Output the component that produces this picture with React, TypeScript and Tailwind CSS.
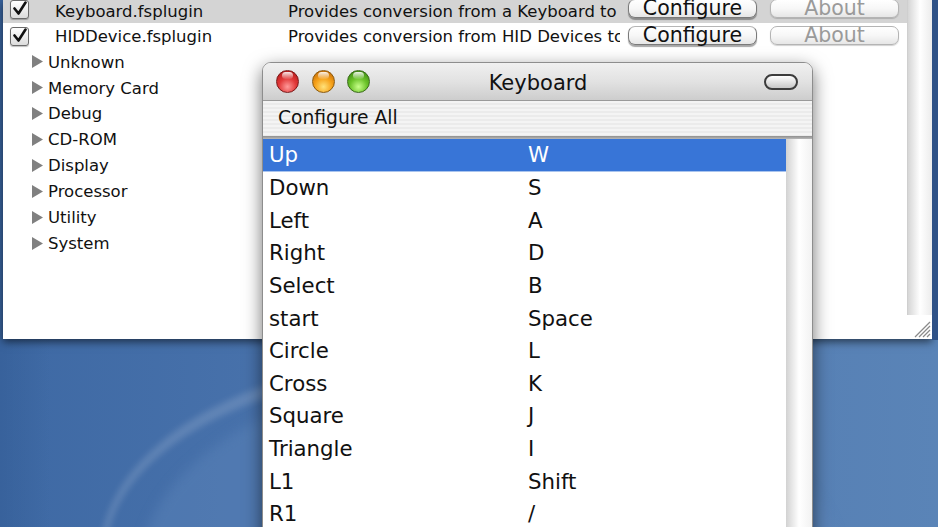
import React from "react";

const plugins = [
  { name: "Keyboard.fsplugin", desc: "Provides conversion from a Keyboard to PlayStation controller input", sel: true, h: "h-[23px]", cb: "-mt-[5px]", bt: "-mt-[6px]", tx: "mt-[1px]" },
  { name: "HIDDevice.fsplugin", desc: "Provides conversion from HID Devices to PlayStation controller input", sel: false, h: "h-[26px]", cb: "mt-0", bt: "-mt-[1px]", tx: "mt-[2px]" },
];

const tree = ["Unknown", "Memory Card", "Debug", "CD-ROM", "Display", "Processor", "Utility", "System"];

const keys: [string, string][] = [
  ["Up", "W"],
  ["Down", "S"],
  ["Left", "A"],
  ["Right", "D"],
  ["Select", "B"],
  ["start", "Space"],
  ["Circle", "L"],
  ["Cross", "K"],
  ["Square", "J"],
  ["Triangle", "I"],
  ["L1", "Shift"],
  ["R1", "/"],
  ["R2", "Tab"],
];

function Check() {
  return (
    <div className="w-[19px] h-[19px] shrink-0 rounded-[3px] border border-[#6b6b6b] bg-gradient-to-b from-white to-[#dcdcdc] flex items-center justify-center shadow-[0_1px_1px_rgba(0,0,0,0.25)]">
      <svg width="16" height="16" viewBox="0 0 16 16">
        <path d="M2.5 7.5 L6.5 12.5 L13.5 1.5" fill="none" stroke="#111" strokeWidth="2.6" strokeLinecap="round" strokeLinejoin="round" />
      </svg>
    </div>
  );
}

function AquaButton({ label, disabled }: { label: string; disabled?: boolean }) {
  return (
    <div
      className={
        "relative h-[19px] w-[129px] shrink-0 rounded-[7px] border bg-gradient-to-b from-white via-[#f7f7f7] to-[#e6e6e6] flex items-end justify-center leading-none text-[20.5px] " +
        (disabled
          ? "text-[#9a9a9a] border-[#b4b4b4] shadow-[0_1px_1px_rgba(0,0,0,0.18)]"
          : "text-[#111] border-[#7a7a7a] border-t-[#b5b5b5] shadow-[0_1.5px_1px_rgba(0,0,0,0.35)]")
      }
    >
      <span className="mb-[-1px]">{label}</span>
    </div>
  );
}

function Triangle() {
  return (
    <svg width="13" height="15" viewBox="0 0 13 15" className="shrink-0">
      <path d="M1 1 L12 7.5 L1 14 Z" fill="#808080" />
    </svg>
  );
}

function Light({ c }: { c: "red" | "orange" | "green" }) {
  const cls =
    c === "red"
      ? "bg-[radial-gradient(circle_at_50%_75%,#ff9a9a_0%,#e23a3a_45%,#a80d0d_100%)] border-[#7a1a1a]"
      : c === "orange"
      ? "bg-[radial-gradient(circle_at_50%_75%,#ffe27a_0%,#f6a21a_45%,#b85c00_100%)] border-[#8a5a10]"
      : "bg-[radial-gradient(circle_at_50%_75%,#c8ff8a_0%,#6cc32a_45%,#2f7a0a_100%)] border-[#3a6a1a]";
  return (
    <div className={"relative w-[23px] h-[23px] rounded-full border " + cls}>
      <div className="absolute left-[5px] top-[1px] w-[11px] h-[7px] rounded-full bg-gradient-to-b from-white/90 to-white/10" />
    </div>
  );
}

export default function App() {
  return (
    <div className="relative w-[938px] h-[527px] overflow-hidden font-['DejaVu_Sans',sans-serif] bg-[#5a83b6]">
      {/* desktop wallpaper */}
      <div className="absolute inset-0 bg-gradient-to-r from-[#3e69a4] via-[#4f78b0] to-[#5a84b7]" />
      <div className="absolute left-[100px] top-[355px] w-[700px] h-[400px] rounded-[50%] border-t-[14px] border-l-[6px] border-white/15 blur-[3px]" />
      <div className="absolute left-[140px] top-[370px] w-[700px] h-[400px] rounded-[50%] bg-[#5f88bb]/40 blur-[6px]" />
      <div className="absolute left-0 top-0 w-[50px] h-[527px] bg-gradient-to-r from-[#345d96] to-transparent opacity-60" />

      {/* back window */}
      <div className="absolute left-[3px] top-0 w-[929px] h-[339px] bg-white shadow-[0_3px_8px_rgba(0,0,0,0.55)] flex">
        <div className="flex-1 flex flex-col text-[16.5px] text-[#111] leading-none">
          {plugins.map((p) => (
            <div key={p.name} className={"flex items-center shrink-0 " + p.h + (p.sel ? " bg-[#d4d4d4]" : "")}>
              <div className={"w-[52px] pl-[7px] shrink-0 " + p.cb}>
                <Check />
              </div>
              <div className={"w-[233px] shrink-0 whitespace-nowrap " + p.tx}>{p.name}</div>
              <div className={"w-[332px] shrink-0 overflow-hidden whitespace-nowrap " + p.tx}>{p.desc}</div>
              <div className={"ml-[8px] flex gap-[13px] " + p.bt}>
                <AquaButton label="Configure" />
                <AquaButton label="About" disabled />
              </div>
            </div>
          ))}
          {tree.map((t) => (
            <div key={t} className="h-[25.9px] shrink-0 flex items-center pl-[28px] gap-[4px]">
              <Triangle />
              <span className="mt-[2px]">{t}</span>
            </div>
          ))}
        </div>
        <div className="w-[25px] shrink-0 flex flex-col">
          <div className="flex-1 bg-gradient-to-r from-[#d6d6d6] via-white to-[#ececec] border-l border-[#cfcfcf]" />
          <div className="h-[24px] bg-white flex items-end justify-end pr-[1px] pb-[1px]">
            <svg width="20" height="20" viewBox="0 0 20 20">
              <g stroke="#8a8a8a" strokeWidth="1.3">
                <line x1="4" y1="19" x2="19" y2="4" />
                <line x1="8" y1="19" x2="19" y2="8" />
                <line x1="12" y1="19" x2="19" y2="12" />
                <line x1="16" y1="19" x2="19" y2="16" />
              </g>
            </svg>
          </div>
        </div>
      </div>
      <div className="absolute left-[932px] top-0 w-[6px] h-[340px] bg-[#2f5287]" />

      {/* keyboard window */}
      <div className="absolute left-[262px] top-[62px] w-[551px] h-[500px] rounded-t-[9px] border border-[#8d8d8d] bg-white shadow-[0_6px_18px_rgba(0,0,0,0.55)] flex flex-col overflow-hidden">
        {/* title bar */}
        <div className="h-[37px] shrink-0 bg-gradient-to-b from-[#f0f0f0] via-[#e2e2e2] to-[#cdcdcd] flex items-center px-[13px] relative">
          <div className="flex gap-[12.5px]">
            <Light c="red" />
            <Light c="orange" />
            <Light c="green" />
          </div>
          <div className="flex-1 text-center text-[21px] text-[#111] leading-none -ml-[58px] mt-[3px]">Keyboard</div>
          <div className="w-[34px] h-[16px] rounded-full border-2 border-[#3c3c3c] bg-gradient-to-b from-white to-[#c8c8c8] mr-[1px]" />
        </div>
        {/* toolbar */}
        <div className="h-[36px] shrink-0 border-t border-[#9a9a9a] bg-[repeating-linear-gradient(to_bottom,#f4f4f4_0px,#f4f4f4_2px,#ebebeb_2px,#ebebeb_4px)] flex items-center px-[15px] text-[18.7px] text-[#111] leading-none">
          Configure All
        </div>
        <div className="h-[3px] shrink-0 bg-gradient-to-b from-[#8f8f8f] to-[#b8b8b8]" />
        {/* list */}
        <div className="flex-1 flex">
          <div className="flex-1 flex flex-col text-[21.3px] leading-none text-[#111]">
            {keys.map(([k, v], i) => (
              <div
                key={k}
                className={
                  "h-[32.6px] shrink-0 flex items-center pl-[6px] " +
                  (i === 0 ? "bg-[#3875d7] text-white border-b border-[#a9c4ee]" : "")
                }
              >
                <span className="w-[259px] shrink-0">{k}</span>
                <span>{v}</span>
              </div>
            ))}
          </div>
          <div className="w-[26px] shrink-0 bg-gradient-to-r from-[#d2d2d2] via-white to-[#f2f2f2]" />
        </div>
      </div>
    </div>
  );
}
